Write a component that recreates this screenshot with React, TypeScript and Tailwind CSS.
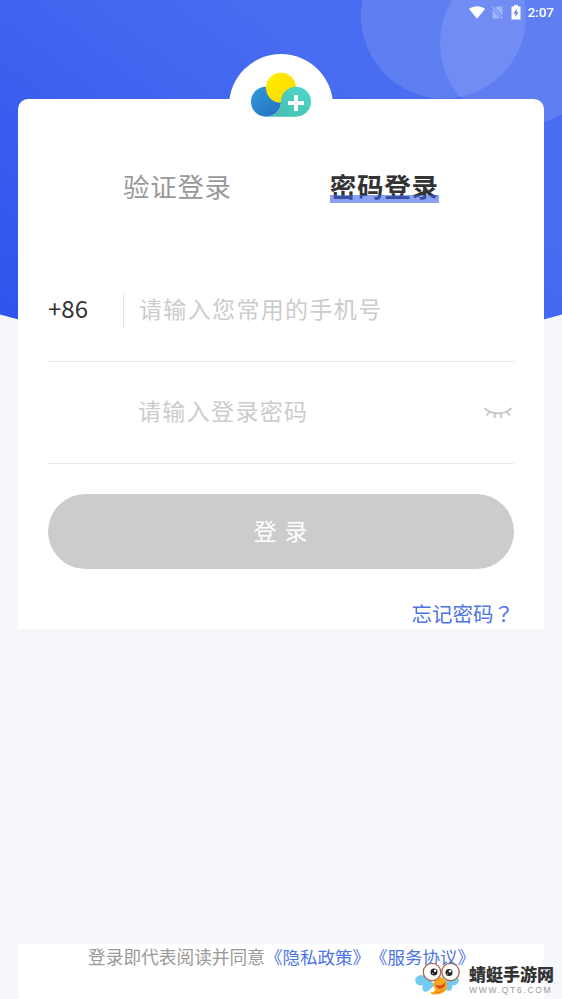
import type { ReactNode } from "react";

function Backdrop() {
  return (
    <svg className="absolute inset-x-0 top-0" width="562" height="355" viewBox="0 0 562 355" aria-hidden>
      <defs>
        <linearGradient id="sky" gradientUnits="userSpaceOnUse" x1="0" y1="330" x2="250" y2="0">
          <stop offset="0" stopColor="#2e53ec" />
          <stop offset="1" stopColor="#486df1" />
        </linearGradient>
        <clipPath id="hill">
          <path d="M0 0H562V314.500Q281 395 0 314.500Z" />
        </clipPath>
      </defs>
      <g clipPath="url(#hill)">
        <rect width="562" height="355" fill="url(#sky)" />
        <circle cx="443.5" cy="16" r="82.5" fill="#fff" fillOpacity=".12" />
        <circle cx="522" cy="43" r="82" fill="#fff" fillOpacity=".12" />
      </g>
    </svg>
  );
}

function StatusBar() {
  return (
    <div className="relative flex h-[24px] items-center justify-end pr-[8px] text-white">
      <svg width="16" height="13" viewBox="0 0 16 13" fill="currentColor" aria-hidden>
        <path d="M0 3C4.500-.8 11.500-.8 16 3L8 12.800Z" />
      </svg>
      <svg className="ml-[7px] opacity-35" width="11" height="13" viewBox="0 0 11 13" aria-hidden>
        <path d="M4 .5H10.500V9.500L3.500 2ZM.5 4L8.500 12.500H.5Z" fill="currentColor" />
        <path d="M.3 1L10.700 12.500" stroke="currentColor" strokeWidth="1.200" />
      </svg>
      <svg className="ml-[8px]" width="10" height="15" viewBox="0 0 10 15" aria-hidden>
        <path d="M3 0H7V1.500H9.500V14.500H.5V1.500H3Z" fill="currentColor" />
        <path d="M6 3.500L2.500 8.500H4.700L4 12L7.500 7.200H5.300Z" fill="#5b78e8" />
      </svg>
      <span className="ml-[6px] mt-[2px] font-['Roboto',sans-serif] text-[13.5px] font-medium leading-none">2:07</span>
    </div>
  );
}

function Logo() {
  return (
    <svg className="absolute -top-[45px] left-[211px]" width="104" height="68" viewBox="0 0 104 68" aria-hidden>
      <defs>
        <linearGradient id="blue" x1="0" y1="0" x2="1" y2="1">
          <stop offset="0" stopColor="#3199dc" />
          <stop offset="1" stopColor="#246fbd" />
        </linearGradient>
        <linearGradient id="yellow" x1="0" y1="0" x2="1" y2="1">
          <stop offset="0" stopColor="#fff100" />
          <stop offset="1" stopColor="#fbd500" />
        </linearGradient>
        <linearGradient id="teal" x1="0" y1="1" x2="1" y2="0">
          <stop offset="0" stopColor="#43bcae" />
          <stop offset="1" stopColor="#50d8c8" />
        </linearGradient>
      </defs>
      <circle cx="52" cy="52" r="52" fill="#fff" />
      <circle cx="37" cy="47.700" r="15" fill="url(#blue)" />
      <circle cx="52" cy="33.800" r="15" fill="url(#yellow)" />
      <path d="M37 62.700A15 15 0 0 0 52 47.700A15 15 0 1 1 67 62.700Z" fill="url(#teal)" />
      <path d="M67 41V57M59 49H75" stroke="#fff" strokeWidth="3.800" />
    </svg>
  );
}

function ClosedEye() {
  return (
    <svg
      className="ml-auto mr-[2px]"
      width="28"
      height="12"
      viewBox="0 0 28 12"
      fill="none"
      stroke="#c8c8c8"
      strokeWidth="1.900"
      strokeLinecap="round"
      aria-hidden
    >
      <path d="M1 1.500Q6 6.300 14 6.300T27 1.500M5 5L3 8M10.700 6.700V10.300M17.300 6.700V10.300M23 5L25.300 8" />
    </svg>
  );
}

function Field({ prefix, children }: { prefix?: string; children: ReactNode }) {
  return (
    <div className="flex h-[102px] items-center border-b border-[#e9e9e9]">
      <div className="flex h-[34px] w-[75px] shrink-0 items-center pb-[5px] font-['Noto_Sans_CJK_SC',sans-serif] text-[24px] text-[#333]">
        {prefix}
      </div>
      {children}
    </div>
  );
}

function Dragonfly() {
  return (
    <svg width="46" height="36" viewBox="0 0 46 36" aria-hidden>
      <path d="M12 15C5 11-1 15 .5 20C1.500 23 5 24 8 23C6 28 9 31 13 29L20 23Z" fill="#73cbf0" />
      <path d="M33 15C40 11 45 15 43.500 20C42.500 23 39 24 37 23C38 28 35 30 31 28L25 22Z" fill="#73cbf0" />
      <path
        d="M21 17C26 13 31 17 32 22C33 29 27 33 19 32.500C17 32.500 15 31 16 30C19 30 21 29 19.500 26C18 23 18 20 21 17Z"
        fill="#fba81c"
      />
      <path d="M20 22.500Q26 25 30.500 20.500Q30 27 24.500 27Q22 26.500 20 22.500Z" fill="#dc4a22" />
      <path d="M20 31Q26 31 29 27" fill="none" stroke="#e57c13" strokeWidth="1.200" />
      <circle cx="17" cy="10" r="8.700" fill="#fff" stroke="#a8674c" strokeWidth="1.300" />
      <circle cx="35.500" cy="10" r="8.700" fill="#fff" stroke="#a8674c" strokeWidth="1.300" />
      <circle cx="19" cy="10" r="3.500" fill="#222" />
      <circle cx="34" cy="10.500" r="3.500" fill="#222" />
      <circle cx="20" cy="8.800" r="1.200" fill="#fff" />
      <circle cx="35" cy="9.300" r="1.200" fill="#fff" />
      <circle cx="17.700" cy="11.300" r=".6" fill="#fff" />
      <circle cx="32.700" cy="11.800" r=".6" fill="#fff" />
    </svg>
  );
}

function Watermark() {
  return (
    <div className="absolute bottom-0 left-[415px] flex h-[37px] items-start">
      <Dragonfly />
      <div className="ml-[8px] whitespace-nowrap pt-px">
        <p className="text-[17px] font-black leading-[23px] text-[#333]">蜻蜓手游网</p>
        <p className="font-['Liberation_Sans',sans-serif] text-[8.5px] leading-[9px] tracking-[1.7px] text-[#999]">
          WWW.QT6.COM
        </p>
      </div>
    </div>
  );
}

export default function App() {
  return (
    <div className="relative flex h-[999px] w-[562px] flex-col overflow-hidden bg-[#f6f7fa] font-['Noto_Sans','Noto_Sans_CJK_SC',sans-serif] [text-spacing-trim:space-all]">
      <Backdrop />
      <StatusBar />

      <main className="relative mx-[18px] mt-[75px] h-[530px] rounded-t-[10px] bg-white px-[30px]">
        <Logo />
        <div className="relative flex pt-[69px] text-[26.5px] leading-[38px] tracking-[0.7px]">
          <span className="ml-[75px] text-[#999]">验证登录</span>
          <span className="relative ml-[98px] font-bold text-[#333]">
            密码登录
            <span className="absolute bottom-[3px] left-0 h-[8px] w-[109px] bg-[#3c61e8]/60" />
          </span>
        </div>

        <div className="mt-[54px]">
          <Field prefix="+86">
            <span className="h-[34px] w-px bg-[#e5e5e5]" />
            <span className="ml-[15px] pb-[2px] text-[23px] tracking-[1.35px] text-[#ccc]">请输入您常用的手机号</span>
          </Field>
          <Field>
            <span className="ml-[15px] pb-[2px] text-[23px] tracking-[1.35px] text-[#ccc]">请输入登录密码</span>
            <ClosedEye />
          </Field>
        </div>

        <button className="mt-[30px] flex h-[75px] w-full items-center justify-center rounded-full bg-[#ccc] text-[23px] tracking-[1px] text-white">
          登 录
        </button>
        <p className="mt-[30px] text-right font-['Noto_Sans_CJK_SC',sans-serif] text-[20.5px] leading-[28px] text-[#4f74e3]">
          忘记密码<span className="font-['Noto_Sans_CJK_TC',sans-serif]">？</span>
        </p>
      </main>

      <footer className="mx-[18px] mt-auto h-[55px] whitespace-nowrap bg-white pl-[70px] text-[17.7px] leading-[26px] text-[#999]">
        登录即代表阅读并同意<span className="text-[17.5px] text-[#4f74e3]">《隐私政策》《服务协议》</span>
      </footer>
      <Watermark />
    </div>
  );
}
